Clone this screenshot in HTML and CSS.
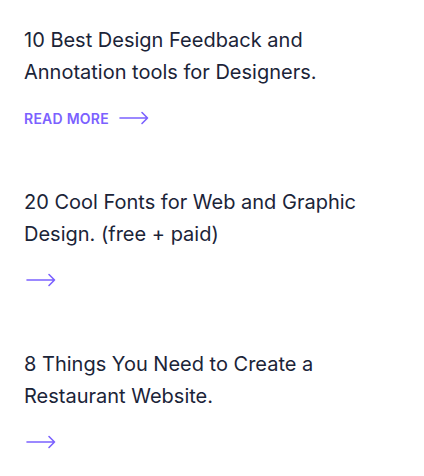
FILE: index.html
```html
<!DOCTYPE html>
<html lang="en">
<head>
<meta charset="utf-8">
<link rel="stylesheet" href="styles.css">
</head>
<body>
<main class="list">
  <article class="post">
    <h2 class="post-title">10 Best Design Feedback and Annotation tools for Designers.</h2>
    <a class="post-link" href="#">
      <span class="post-link-text">READ MORE</span>
      <svg class="arrow" width="32" height="14" viewBox="0 0 32 14" fill="none" stroke="currentColor" stroke-width="1.6" stroke-linecap="round" stroke-linejoin="round"><path d="M3 7H30.5M25 1.5L30.5 7L25 12.5"/></svg>
    </a>
  </article>
  <article class="post">
    <h2 class="post-title">20 Cool Fonts for Web and Graphic Design. (free + paid)</h2>
    <a class="post-link" href="#">
      <svg class="arrow" width="32" height="14" viewBox="0 0 32 14" fill="none" stroke="currentColor" stroke-width="1.6" stroke-linecap="round" stroke-linejoin="round"><path d="M3 7H30.5M25 1.5L30.5 7L25 12.5"/></svg>
    </a>
  </article>
  <article class="post">
    <h2 class="post-title">8 Things You Need to Create a Restaurant Website.</h2>
    <a class="post-link" href="#">
      <svg class="arrow" width="32" height="14" viewBox="0 0 32 14" fill="none" stroke="currentColor" stroke-width="1.6" stroke-linecap="round" stroke-linejoin="round"><path d="M3 7H30.5M25 1.5L30.5 7L25 12.5"/></svg>
    </a>
  </article>
</main>
</body>
</html>
```
FILE: styles.css
```css
html, body {
  margin: 0;
  padding: 0;
  background: #ffffff;
}
body {
  font-family: Inter, "Noto Sans", sans-serif;
  color: #1b2438;
}
.list {
  display: flex;
  flex-direction: column;
  gap: 58px;
  padding: 24px 24px 0 24px;
}
.post {
  display: flex;
  flex-direction: column;
  align-items: flex-start;
  gap: 20px;
}
.post-title {
  margin: 0;
  font-size: 20px;
  font-weight: 400;
  line-height: 32px;
  width: 350px;
}
.post-link {
  display: flex;
  align-items: center;
  gap: 8px;
  height: 20px;
  color: #7b61ff;
  text-decoration: none;
}
.post-link-text {
  font-size: 14px;
  font-weight: 600;
  letter-spacing: 0.25px;
}
.arrow {
  display: block;
}
```
